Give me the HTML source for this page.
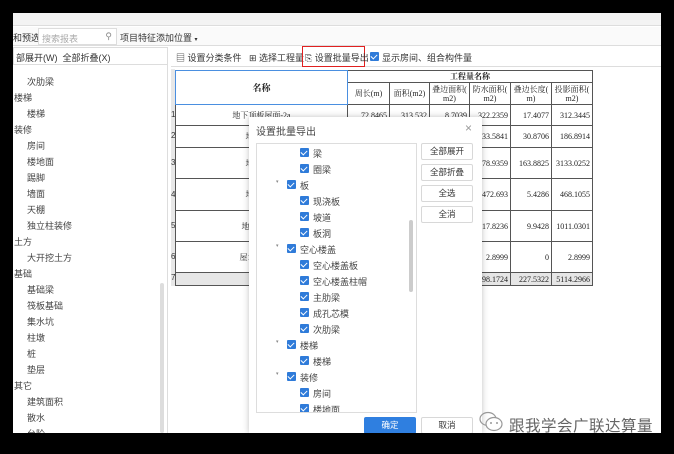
<!DOCTYPE html>
<html><head><meta charset="utf-8"><style>
*{margin:0;padding:0;box-sizing:border-box}
body{width:674px;height:454px;background:#000;position:relative;overflow:hidden;font-family:"Liberation Sans","Noto Sans CJK SC",sans-serif;font-size:9px;color:#333}
.a{position:absolute;white-space:nowrap}
.cb{position:absolute;width:9px;height:9px;background:#2f7bd9;border-radius:1px}
.cb:after{content:"";position:absolute;left:2px;top:1px;width:3px;height:5px;border:solid #fff;border-width:0 1.5px 1.5px 0;transform:rotate(45deg)}
.btn{position:absolute;background:#fff;border:1px solid #d8d8d8;border-radius:2px;text-align:center;line-height:15px;font-size:8.5px}
table{border-collapse:collapse;position:absolute;left:175px;top:70px;font-family:"Liberation Serif","Noto Serif CJK SC",serif;font-size:8px}
td{border:1px solid #555;text-align:right;padding:0 2px;color:#222}
.rn{position:absolute;left:171px;font-size:8px;color:#333}
</style></head><body>
<div class="a" style="left:13px;top:13px;width:648px;height:420px;background:#fff"></div>
<div class="a" style="left:13px;top:13px;width:648px;height:13px;background:#f3f3f3;border-bottom:1px solid #ddd"></div>
<div class="a" style="left:13px;top:27px;width:648px;height:19px;background:#fafafa;border-bottom:1px solid #ddd"></div>
<div class="a" style="left:13px;top:31px">和预选</div>
<div class="a" style="left:38px;top:28px;width:79px;height:17px;border:1px solid #ddd;background:#fff;color:#aaa;padding:3px 3px">搜索报表<span style="position:absolute;right:4px;top:2px;color:#888">⚲</span></div>
<div class="a" style="left:120px;top:31px">项目特征添加位置 <span style="font-size:6px">▾</span></div>
<div class="a" style="left:13px;top:47px;width:155px;height:18px;border:1px solid #ddd;background:#fff;padding:3px 2px">部展开(W) &nbsp;全部折叠(X)</div>
<div class="a" style="left:167px;top:47px;width:1px;height:386px;background:#ddd"></div>
<div class="a" style="left:160px;top:283px;width:4px;height:150px;background:#ddd;border-radius:2px"></div>
<div class="a" style="left:27px;top:74px;line-height:16px;color:#444">次肋梁</div>
<div class="a" style="left:14px;top:90px;line-height:16px;color:#444">楼梯<br><span style="margin-left:13px">楼梯</span><br>装修<br><span style="margin-left:13px">房间</span><br><span style="margin-left:13px">楼地面</span><br><span style="margin-left:13px">踢脚</span><br><span style="margin-left:13px">墙面</span><br><span style="margin-left:13px">天棚</span><br><span style="margin-left:13px">独立柱装修</span><br>土方<br><span style="margin-left:13px">大开挖土方</span><br>基础<br><span style="margin-left:13px">基础梁</span><br><span style="margin-left:13px">筏板基础</span><br><span style="margin-left:13px">集水坑</span><br><span style="margin-left:13px">柱墩</span><br><span style="margin-left:13px">桩</span><br><span style="margin-left:13px">垫层</span><br>其它<br><span style="margin-left:13px">建筑面积</span><br><span style="margin-left:13px">散水</span><br><span style="margin-left:13px">台阶</span></div>
<div class="a" style="left:171px;top:47px;width:490px;height:20px;border-bottom:1px solid #ddd"></div>
<div class="a" style="left:176px;top:51px">▤ 设置分类条件 &nbsp;&nbsp;⊞ 选择工程量</div>
<div class="a" style="left:302px;top:46px;width:63px;height:21px;border:1.5px solid #e02020;padding:4px 2px">⎘ 设置批量导出</div>
<div class="cb" style="left:370px;top:52px"></div>
<div class="a" style="left:382px;top:51px">显示房间、组合构件量</div>
<div class="a" style="left:171px;top:69px;width:4px;height:217px;background:#e8e8e8"></div>
<div class="rn" style="top:110px">1</div>
<div class="rn" style="top:131px">2</div>
<div class="rn" style="top:158px">3</div>
<div class="rn" style="top:190px">4</div>
<div class="rn" style="top:221px">5</div>
<div class="rn" style="top:252px">6</div>
<div class="rn" style="top:273px">7</div>
<table>
<tr style="height:12px"><td rowspan="2" style="width:172px;border:1.5px solid #4a8fe0;text-align:center;font-weight:bold;font-size:9px">名称</td><td colspan="6" style="text-align:center;font-weight:bold">工程量名称</td></tr>
<tr style="height:22px;text-align:center"><td style="width:42px;text-align:center">周长(m)</td><td style="width:40px;text-align:center">面积(m2)</td><td style="width:40px;text-align:center;line-height:9px">叠边面积(<br>m2)</td><td style="width:41px;text-align:center;line-height:9px">防水面积(<br>m2)</td><td style="width:41px;text-align:center;line-height:9px">叠边长度(<br>m)</td><td style="width:41px;text-align:center;line-height:9px">投影面积(<br>m2)</td></tr>
<tr style="height:21px"><td style="text-align:center">地下顶板屋面-2a</td><td>72.8465</td><td>313.532</td><td>8.7039</td><td>322.2359</td><td>17.4077</td><td>312.3445</td></tr>
<tr style="height:22px"><td style="text-align:center">地下顶板</td><td></td><td></td><td></td><td>33.5841</td><td>30.8706</td><td>186.8914</td></tr>
<tr style="height:31px"><td style="text-align:center">地下顶板</td><td></td><td></td><td></td><td>78.9359</td><td>163.8825</td><td>3133.0252</td></tr>
<tr style="height:32px"><td style="text-align:center">地下顶板</td><td></td><td></td><td></td><td>472.693</td><td>5.4286</td><td>468.1055</td></tr>
<tr style="height:31px"><td style="text-align:center">地下顶板屋</td><td></td><td></td><td></td><td>17.8236</td><td>9.9428</td><td>1011.0301</td></tr>
<tr style="height:31px"><td style="text-align:center">屋108小屋面</td><td></td><td></td><td></td><td>2.8999</td><td>0</td><td>2.8999</td></tr>
<tr style="height:13px;background:#e6e6e6"><td></td><td></td><td></td><td></td><td>98.1724</td><td>227.5322</td><td>5114.2966</td></tr>
</table>
<div class="a" style="left:249px;top:117px;width:233px;height:316px;background:#fff;box-shadow:0 0 6px rgba(0,0,0,.25)"></div>
<div class="a" style="left:256px;top:123px;font-size:10px;color:#444">设置批量导出</div>
<div class="a" style="left:465px;top:121px;font-size:12px;color:#999">×</div>
<div class="a" style="left:256px;top:143px;width:161px;height:270px;border:1px solid #ddd;overflow:hidden">
<div class="a" style="left:152px;top:76px;width:4px;height:72px;background:#ccc;border-radius:2px"></div>
</div>
<div class="a" style="left:256px;top:144px;width:150px;height:268px;overflow:hidden">
<div style="position:relative;font-size:9px;color:#444">
<div class="cb" style="left:44px;top:4px"></div><div class="a" style="left:57px;top:3px">梁</div>
<div class="cb" style="left:44px;top:20px"></div><div class="a" style="left:57px;top:19px">圈梁</div>
<div class="a" style="left:20px;top:35px;font-size:5px;color:#888">▾</div><div class="cb" style="left:31px;top:36px"></div><div class="a" style="left:44px;top:35px">板</div>
<div class="cb" style="left:44px;top:52px"></div><div class="a" style="left:57px;top:51px">现浇板</div>
<div class="cb" style="left:44px;top:68px"></div><div class="a" style="left:57px;top:67px">坡道</div>
<div class="cb" style="left:44px;top:84px"></div><div class="a" style="left:57px;top:83px">板洞</div>
<div class="a" style="left:20px;top:99px;font-size:5px;color:#888">▾</div><div class="cb" style="left:31px;top:100px"></div><div class="a" style="left:44px;top:99px">空心楼盖</div>
<div class="cb" style="left:44px;top:116px"></div><div class="a" style="left:57px;top:115px">空心楼盖板</div>
<div class="cb" style="left:44px;top:132px"></div><div class="a" style="left:57px;top:131px">空心楼盖柱帽</div>
<div class="cb" style="left:44px;top:148px"></div><div class="a" style="left:57px;top:147px">主肋梁</div>
<div class="cb" style="left:44px;top:164px"></div><div class="a" style="left:57px;top:163px">成孔芯模</div>
<div class="cb" style="left:44px;top:180px"></div><div class="a" style="left:57px;top:179px">次肋梁</div>
<div class="a" style="left:20px;top:195px;font-size:5px;color:#888">▾</div><div class="cb" style="left:31px;top:196px"></div><div class="a" style="left:44px;top:195px">楼梯</div>
<div class="cb" style="left:44px;top:212px"></div><div class="a" style="left:57px;top:211px">楼梯</div>
<div class="a" style="left:20px;top:227px;font-size:5px;color:#888">▾</div><div class="cb" style="left:31px;top:228px"></div><div class="a" style="left:44px;top:227px">装修</div>
<div class="cb" style="left:44px;top:244px"></div><div class="a" style="left:57px;top:243px">房间</div>
<div class="cb" style="left:44px;top:260px"></div><div class="a" style="left:57px;top:259px">楼地面</div>
</div></div>
<div class="btn" style="left:421px;top:143px;width:52px;height:17px">全部展开</div>
<div class="btn" style="left:421px;top:164px;width:52px;height:17px">全部折叠</div>
<div class="btn" style="left:421px;top:185px;width:52px;height:17px">全选</div>
<div class="btn" style="left:421px;top:206px;width:52px;height:17px">全消</div>
<div class="btn" style="left:364px;top:417px;width:52px;height:17px;background:#2f7fe0;border-color:#2f7fe0;color:#fff">确定</div>
<div class="btn" style="left:421px;top:417px;width:52px;height:17px">取消</div>
<div class="a" style="left:0;top:433px;width:674px;height:21px;background:#000"></div>
<div class="a" style="left:661px;top:0;width:13px;height:454px;background:#000"></div>
<svg class="a" style="left:478px;top:410px" width="26" height="24" viewBox="0 0 26 24"><g fill="none" stroke="#999" stroke-width="1.2"><ellipse cx="10" cy="9" rx="8" ry="6.5"/><ellipse cx="16" cy="14" rx="8" ry="6.5" fill="#fff"/></g><circle cx="13" cy="13" r="1" fill="#999"/><circle cx="19" cy="13" r="1" fill="#999"/></svg>
<div class="a" style="left:509px;top:414px;font-size:15.5px;color:#666;letter-spacing:0.5px">跟我学会广联达算量</div>
</body></html>
